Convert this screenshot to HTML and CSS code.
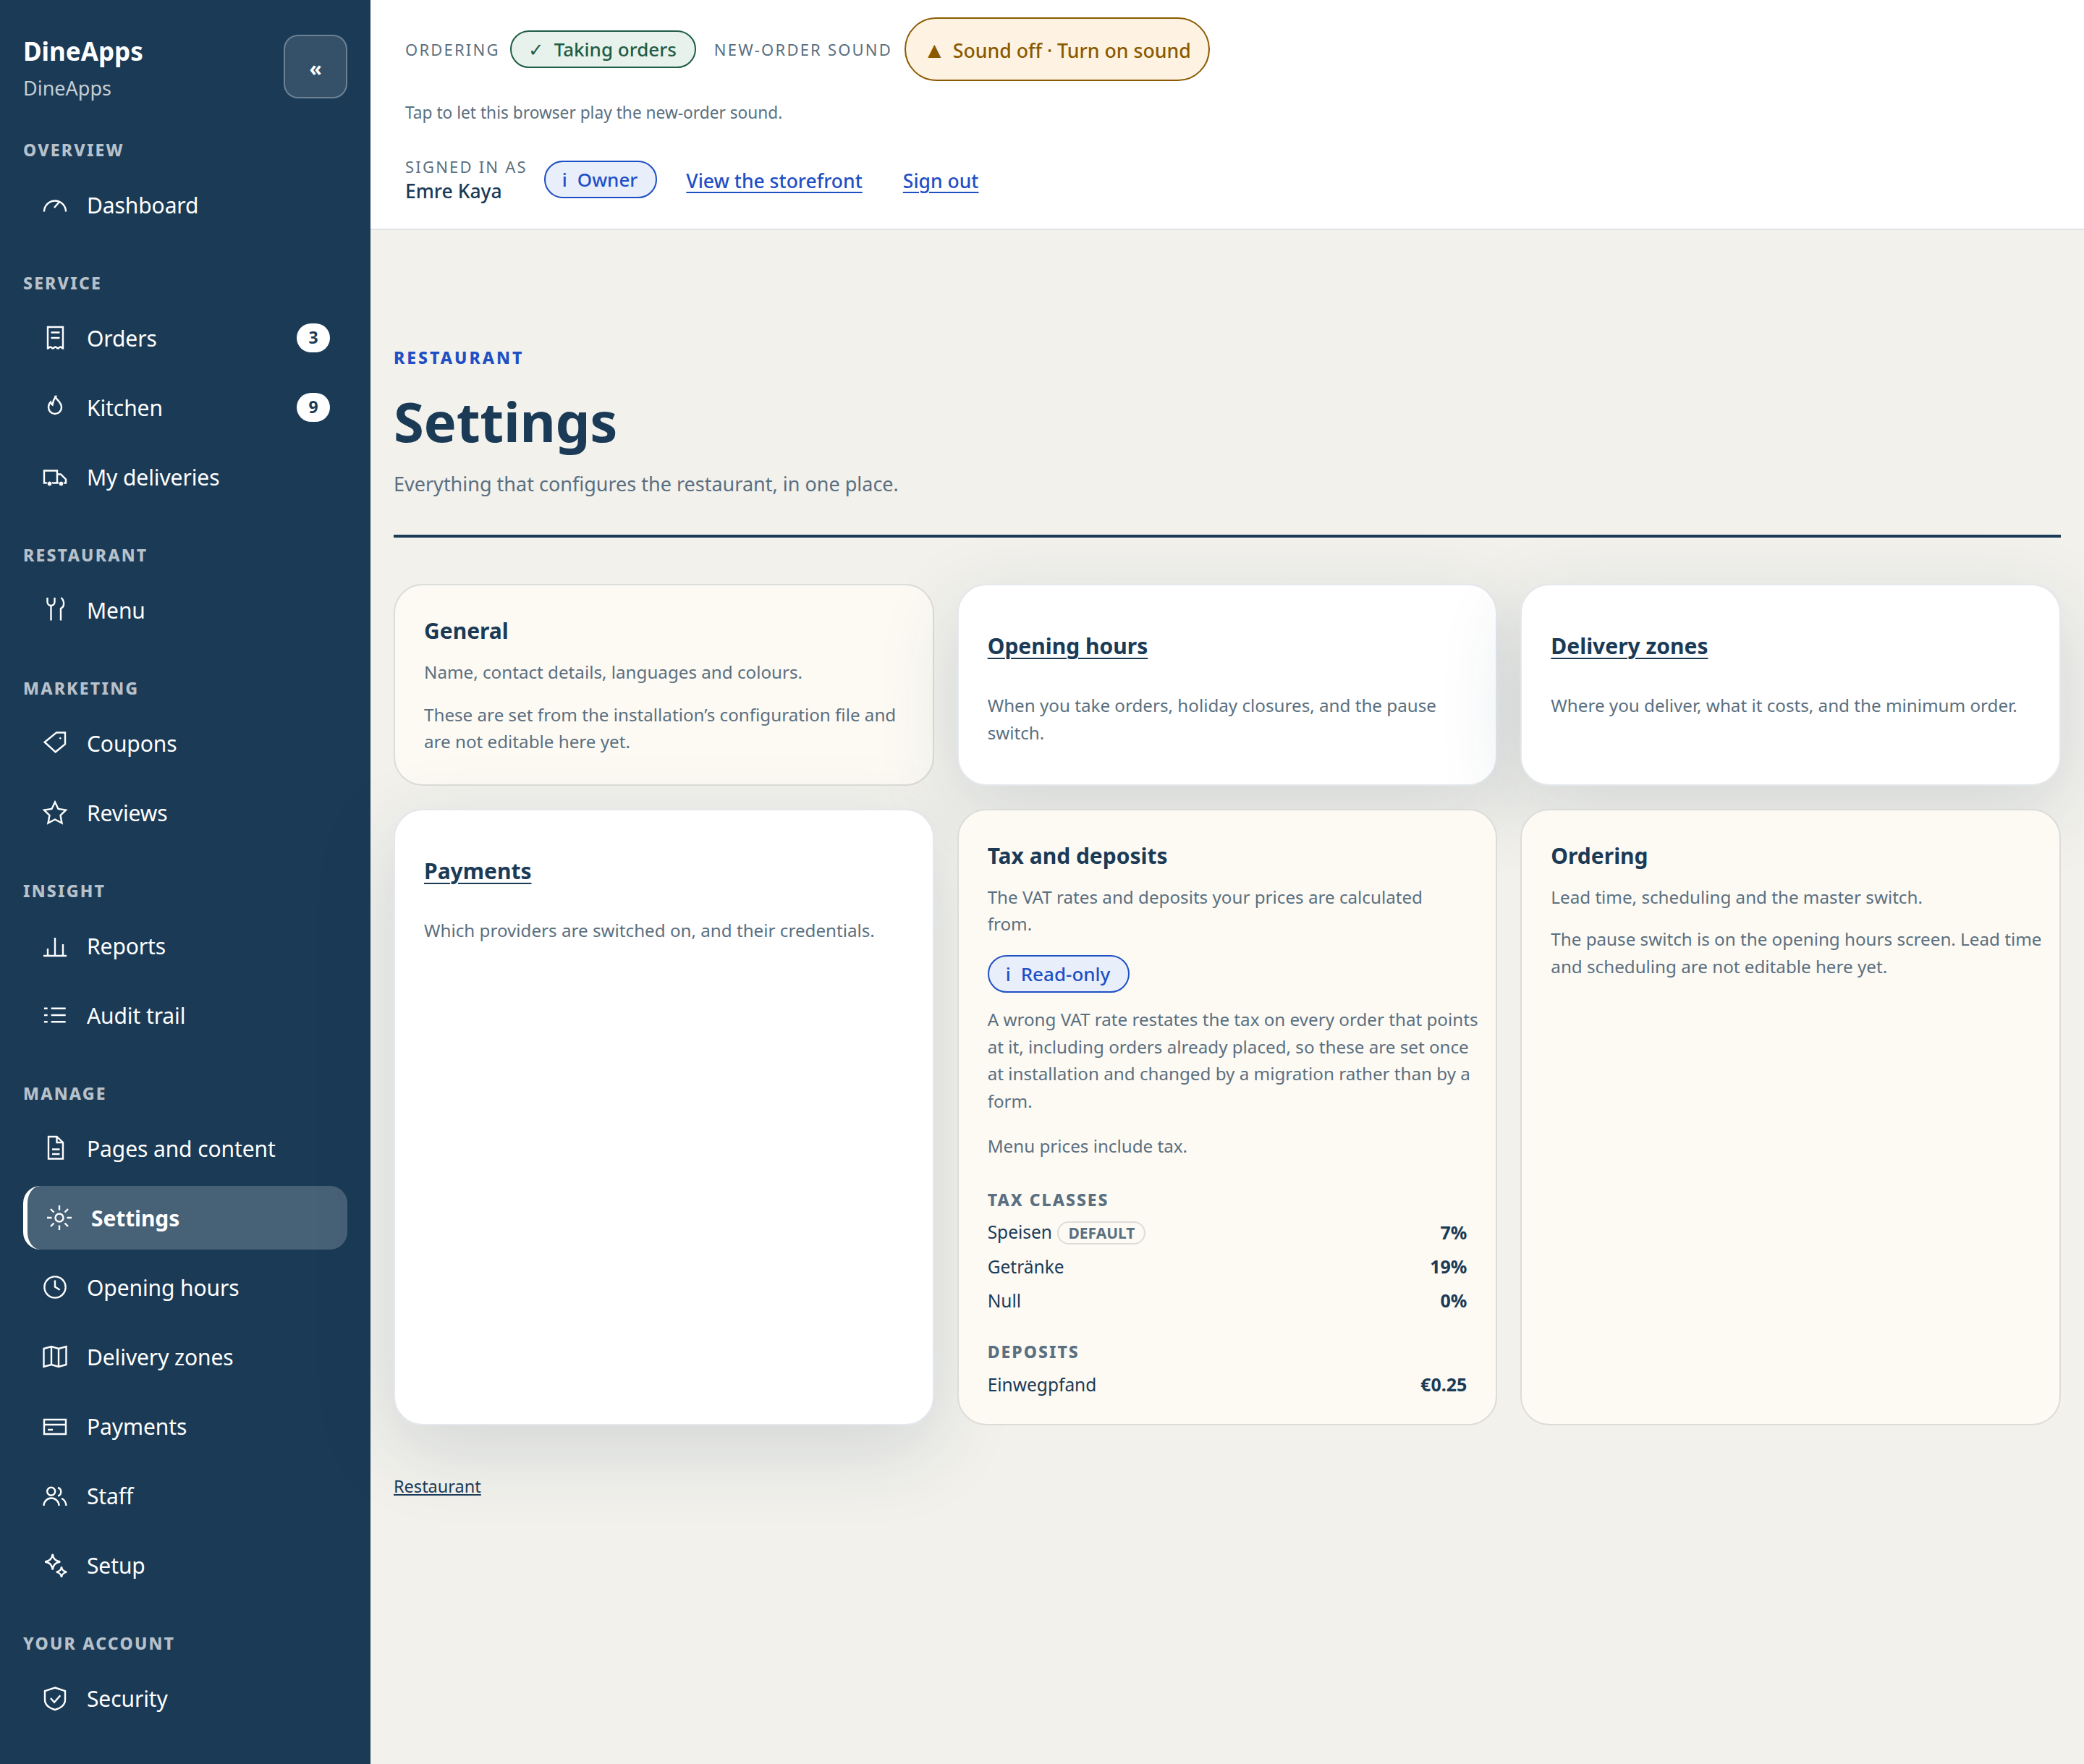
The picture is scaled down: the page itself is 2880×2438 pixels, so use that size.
FILE: index.html
```html
<!DOCTYPE html>
<html lang="en">
<head>
    <meta charset="UTF-8">
    <meta name="viewport" content="width=device-width, initial-scale=1.0">
    <title>Settings - DineApps</title>
    <link rel="stylesheet" href="styles.css">
</head>
<body>
    <div class="shell">
        <aside class="sidebar">
            <div class="brand">
                <div class="brand-text">
                    <div class="brand-name">DineApps</div>
                    <div class="brand-sub">DineApps</div>
                </div>
                <button class="collapse" type="button">«</button>
            </div>

            <div class="nav-label first">Overview</div>
            <a class="nav-item"><svg class="nav-icon" viewBox="0 0 32 32"><path d="M1 25.500a15 15 0 0 1 30 0M15 20l7-8"/></svg>Dashboard</a>

            <div class="nav-label">Service</div>
            <a class="nav-item"><svg class="nav-icon" viewBox="0 0 32 32"><path d="M6 1h21v29.500c-1.500 0-1.500-2-3.500-2s-2 2-3.500 2-1.500-2-3.500-2-2 2-3.500 2-1.500-2-3.500-2-2 2-3.500 2zM10.500 8.500h12M10.500 16h12"/></svg>Orders<span class="badge">3</span></a>
            <a class="nav-item"><svg class="nav-icon" viewBox="0 0 32 32"><path d="M16.500 1c1 4.500 8.500 7.500 8.500 15a9 9 0 0 1-18 0c0-3 1-5.500 3-7.500 .5 2 1 3 2.500 4 .5-4 2-8 4.500-11.500z"/></svg>Kitchen<span class="badge">9</span></a>
            <a class="nav-item"><svg class="nav-icon" viewBox="0 0 32 32"><path d="M6 24.500H1V7.500h18v17h-8M19 12.500h5l7 7v5h-3M19 24.500h2"/><circle class="solid" cx="8.500" cy="25.500" r="3.400"/><circle class="solid" cx="24.500" cy="25.500" r="3.400"/></svg>My deliveries</a>

            <div class="nav-label">Restaurant</div>
            <a class="nav-item"><svg class="nav-icon" viewBox="0 0 32 32"><path d="M5.500-1v6a5 5 0 0 0 10 0v-6M10.500 10v20.500M24.500-1c3 3 4 7 3.500 10-.5 3-2 4-4 5v16.500"/></svg>Menu</a>

            <div class="nav-label">Marketing</div>
            <a class="nav-item"><svg class="nav-icon" viewBox="0 0 32 32"><path d="M1.700 14.700 18 1.500h12v16L16.700 28.300z"/><circle class="solid" cx="23.300" cy="9.300" r="1.800"/></svg>Coupons</a>
            <a class="nav-item"><svg class="nav-icon" viewBox="0 0 32 32"><path d="m16 1.500 4.500 9.500 10.500 1.500-7.500 7.500 2 10.500-9.500-5-9.500 5 2-10.500L1 12.500l10.500-1.500z"/></svg>Reviews</a>

            <div class="nav-label">Insight</div>
            <a class="nav-item"><svg class="nav-icon" viewBox="0 0 32 32"><path d="M0 30h32M6 30V20M16 30V5M27 30V14"/></svg>Reports</a>
            <a class="nav-item"><svg class="nav-icon" viewBox="0 0 32 32"><path d="M10.700 6.700h20M10.700 16h20M10.700 25.300h20M1 6.700h4.700M1 16h4.700M1 25.300h4.700"/></svg>Audit trail</a>

            <div class="nav-label">Manage</div>
            <a class="nav-item"><svg class="nav-icon" viewBox="0 0 32 32"><path d="M7 0h11.500l8.500 8v22.500H7zM18.500 0v8H27M12 17.500h10.500M12 24h10.500"/></svg>Pages and content</a>
            <a class="nav-item active"><svg class="nav-icon" viewBox="0 0 32 32"><circle cx="16" cy="16" r="5.500"/><path d="M16-1v6.500M16 26.500V33M-1 16h6.500M26.500 16H33M4 4l4.500 4.500M23.500 23.500 28 28M4 28l4.500-4.500M23.500 8.500 28 4"/></svg>Settings</a>
            <a class="nav-item"><svg class="nav-icon" viewBox="0 0 32 32"><circle cx="16" cy="16" r="14.600"/><path d="M16 6.500V15.500l6.700 4.200"/></svg>Opening hours</a>
            <a class="nav-item"><svg class="nav-icon" viewBox="0 0 32 32"><path d="M.5 5 11 2l10 3 10.500-3v25L21 30l-10-3-10.500 3zM11 2v25M21 5v25"/></svg>Delivery zones</a>
            <a class="nav-item"><svg class="nav-icon" viewBox="0 0 32 32"><path d="M1 7h30v20H1zM1 14h30M6 21h7"/></svg>Payments</a>
            <a class="nav-item"><svg class="nav-icon" viewBox="0 0 32 32"><circle cx="10.700" cy="10.300" r="5.500"/><path d="M.5 30a10.500 10.500 0 0 1 21 0M20 5a6 6 0 0 1 0 11.500M25 20c4 1.500 6 5 6.500 10"/></svg>Staff</a>
            <a class="nav-item"><svg class="nav-icon" viewBox="0 0 32 32"><path d="M12.700 1c1 6 3 9 10.500 10.500-7.500 1.500-9.500 4.500-10.500 11-1-6.500-3-9.500-10.500-11C9.700 10 11.700 7 12.700 1zM25 18.500c.5 4 2 6 7 7.200-5 1.200-6.500 3.200-7 7.200-.5-4-2-6-7-7.200 5-1.200 6.500-3.200 7-7.200z"/></svg>Setup</a>

            <div class="nav-label">Your account</div>
            <a class="nav-item"><svg class="nav-icon" viewBox="0 0 32 32"><path d="M16 1.500 30 6v12c0 8-7 12-14 14C9 30 2 26 2 18V6zM10 16l5 5.700 8.300-9.400"/></svg>Security</a>
        </aside>

        <div class="main">
            <header class="topbar">
                <div class="topbar-row">
                    <span class="top-label">Ordering</span>
                    <span class="chip chip-green"><span class="chip-icon">✓</span>Taking orders</span>
                    <span class="top-label second">New-order sound</span>
                    <button class="sound-btn" type="button"><span class="chip-icon">▲</span>Sound off · Turn on sound</button>
                </div>
                <p class="top-hint">Tap to let this browser play the new-order sound.</p>
                <div class="topbar-row user-row">
                    <div class="signed">
                        <span class="top-label">Signed in as</span>
                        <strong>Emre Kaya</strong>
                    </div>
                    <span class="chip chip-blue"><span class="chip-icon">i</span>Owner</span>
                    <a class="top-link" href="#">View the storefront</a>
                    <a class="top-link" href="#">Sign out</a>
                </div>
            </header>

            <main class="content">
                <div class="eyebrow">Restaurant</div>
                <h1>Settings</h1>
                <p class="lead">Everything that configures the restaurant, in one place.</p>
                <hr class="rule">

                <div class="cards">
                    <section class="card">
                        <h2>General</h2>
                        <p>Name, contact details, languages and colours.</p>
                        <p>These are set from the installation’s configuration file and<br>are not editable here yet.</p>
                    </section>
                    <section class="card card-link">
                        <h2><a href="#">Opening hours</a></h2>
                        <p>When you take orders, holiday closures, and the pause<br>switch.</p>
                    </section>
                    <section class="card card-link">
                        <h2><a href="#">Delivery zones</a></h2>
                        <p>Where you deliver, what it costs, and the minimum order.</p>
                    </section>
                    <section class="card card-link">
                        <h2><a href="#">Payments</a></h2>
                        <p>Which providers are switched on, and their credentials.</p>
                    </section>
                    <section class="card">
                        <h2>Tax and deposits</h2>
                        <p class="tight">The VAT rates and deposits your prices are calculated<br>from.</p>
                        <span class="chip chip-blue chip-card"><span class="chip-icon">i</span>Read-only</span>
                        <p class="tight">A wrong VAT rate restates the tax on every order that points<br>at it, including orders already placed, so these are set once<br>at installation and changed by a migration rather than by a<br>form.</p>
                        <p>Menu prices include tax.</p>
                        <h3>Tax classes</h3>
                        <dl class="rates">
                            <div><dt>Speisen <span class="tag">Default</span></dt><dd>7%</dd></div>
                            <div><dt>Getränke</dt><dd>19%</dd></div>
                            <div><dt>Null</dt><dd>0%</dd></div>
                        </dl>
                        <h3 class="deposits">Deposits</h3>
                        <dl class="rates last">
                            <div><dt>Einwegpfand</dt><dd>€0.25</dd></div>
                        </dl>
                    </section>
                    <section class="card">
                        <h2>Ordering</h2>
                        <p>Lead time, scheduling and the master switch.</p>
                        <p>The pause switch is on the opening hours screen. Lead time<br>and scheduling are not editable here yet.</p>
                    </section>
                </div>

                <a class="back-link" href="#">Restaurant</a>
            </main>
        </div>
    </div>
</body>
</html>
```

FILE: styles.css
```css
* {
    box-sizing: border-box;
}

body {
    margin: 0;
    font-family: "Noto Sans", sans-serif;
    background-color: #f2f1ec;
    color: #1a3a56;
}

a {
    color: inherit;
}

.shell {
    display: flex;
    min-height: 2438px;
}

/* sidebar */
.sidebar {
    width: 512px;
    flex-shrink: 0;
    background-color: #1a3a56;
    color: white;
    padding: 48px 32px 0;
}

.brand {
    display: flex;
    justify-content: space-between;
    align-items: flex-start;
    height: 88px;
}

.brand-name {
    font-size: 35px;
    font-weight: 700;
    line-height: 46px;
}

.brand-sub {
    font-size: 27px;
    line-height: 40px;
    margin-top: 8px;
    color: rgba(255,255,255,0.75);
}

.collapse {
    width: 88px;
    height: 88px;
    padding: 4px 0 0;
    background-color: rgba(255,255,255,0.12);
    border: 2px solid rgba(255,255,255,0.28);
    border-radius: 20px;
    color: white;
    font-family: inherit;
    font-size: 28px;
    font-weight: 700;
}

.nav-label {
    font-size: 23px;
    font-weight: 800;
    letter-spacing: 2.200px;
    text-transform: uppercase;
    color: rgba(255,255,255,0.7);
    height: 32px;
    line-height: 32px;
    margin-top: 48px;
    margin-bottom: 16px;
}

.nav-label.first {
    margin-top: 55px;
}

.nav-item {
    display: flex;
    align-items: center;
    height: 88px;
    margin-bottom: 8px;
    padding-left: 28px;
    padding-right: 24px;
    font-size: 30px;
    letter-spacing: -0.100px;
    color: white;
    border-radius: 24px;
}

.nav-icon {
    width: 32px;
    height: 32px;
    margin-right: 28px;
    overflow: visible;
    fill: none;
    stroke: white;
    stroke-width: 2.400;
    flex-shrink: 0;
}

.nav-icon .solid {
    fill: white;
    stroke: #1a3a56;
    stroke-width: 1;
}

.nav-item.active {
    background-color: rgba(255,255,255,0.2);
    border-left: 6px solid white;
    font-weight: 700;
}

.badge {
    margin-left: auto;
    width: 46px;
    height: 40px;
    border-radius: 20px;
    background: white;
    color: #1a3a56;
    font-size: 23px;
    font-weight: 700;
    letter-spacing: 0;
    line-height: 38px;
    text-align: center;
}

/* top bar */
.main {
    flex: 1;
    min-width: 0;
}

.topbar {
    background: white;
    border-bottom: 2px solid #dfe3e6;
    height: 318px;
    padding: 24px 48px 0;
}

.topbar-row {
    display: flex;
    align-items: center;
    height: 88px;
}

.top-label {
    font-size: 22px;
    letter-spacing: 2.200px;
    text-transform: uppercase;
    color: #5a6f80;
    margin-right: 14px;
}

.top-label.second {
    margin-left: 25px;
    margin-right: 17px;
}

.chip {
    display: inline-flex;
    align-items: center;
    height: 52px;
    padding: 0 25px 0 23px;
    border-radius: 26px;
    font-size: 26px;
    font-weight: 500;
    border: 2px solid;
}

.chip-icon {
    margin-right: 14px;
}

.chip-green {
    background: #e8f2ec;
    color: #1f5c45;
    border-color: #1f5c45;
}

.chip-blue {
    background: #e8effb;
    color: #1f4fc4;
    border-color: #1f4fc4;
}

.sound-btn {
    height: 88px;
    padding: 0 24px;
    border-radius: 44px;
    background: #fef3e2;
    border: 2px solid #8a5a00;
    color: #8a5a00;
    font-family: inherit;
    font-size: 26.700px;
    font-weight: 500;
}

.sound-btn .chip-icon {
    font-size: 31px;
    margin-right: 10px;
}

.top-hint {
    margin: 27px 0 0;
    font-size: 22.700px;
    line-height: 34px;
    color: #5a6f80;
}

.user-row {
    margin-top: 31px;
}

.signed {
    display: flex;
    flex-direction: column;
    margin-top: 2px;
    margin-right: 9px;
}

.signed strong {
    font-size: 26.500px;
    font-weight: 500;
    line-height: 39px;
}

.top-link {
    font-size: 26.500px;
    font-weight: 500;
    color: #1f4fc4;
    margin-left: 40px;
    margin-top: 3px;
    text-decoration-thickness: 2px;
    text-underline-offset: 5px;
}

.user-row .top-link:last-child {
    margin-left: 56px;
}

/* content */
.content {
    padding: 158px 32px 0;
}

.eyebrow {
    font-size: 23px;
    font-weight: 800;
    letter-spacing: 3px;
    text-transform: uppercase;
    color: #1f4fc4;
    line-height: 36px;
}

h1 {
    font-size: 76px;
    font-weight: 700;
    letter-spacing: -0.300px;
    line-height: 96px;
    margin: 22px 0 0;
}

.lead {
    font-size: 27px;
    line-height: 44px;
    color: #5a6f80;
    margin: 17px 0 0;
}

.rule {
    border: 0;
    border-top: 4px solid #1a3a56;
    margin: 48px 0 0;
}

.cards {
    display: grid;
    grid-template-columns: repeat(3, 1fr);
    gap: 32px;
    margin-top: 64px;
}

.card {
    background: #fdfaf4;
    border: 2px solid #dcdcd8;
    border-radius: 40px;
    padding: 40px 20px 40px 40px;
}

.card-link {
    background: white;
    border-color: #e4e8ec;
    box-shadow: 0 32px 112px rgba(26,58,86,0.15);
}

.card h2 {
    font-size: 30px;
    font-weight: 700;
    line-height: 46px;
    margin: 0;
}

.card-link h2 {
    display: flex;
    align-items: center;
    min-height: 88px;
}

.card h2 a {
    text-decoration-thickness: 2px;
    text-underline-offset: 5px;
}

.card p {
    font-size: 24.200px;
    line-height: 37.600px;
    color: #5a6f80;
    margin: 15px 0 0;
}

.card p + p {
    margin-top: 21px;
}

.card p.tight + p {
    margin-top: 25px;
}

.card-link p {
    margin-top: 19px;
}

.chip-card {
    margin: 24px 0 3px;
}

h3 {
    font-size: 23px;
    font-weight: 800;
    letter-spacing: 2px;
    text-transform: uppercase;
    color: #5a6f80;
    line-height: 32px;
    margin: 39px 0 0;
}

h3.deposits {
    margin-top: 31px;
}

.rates {
    margin: 6px 20px 0 0;
}

.rates.last {
    margin-bottom: -9px;
}

.rates div {
    display: flex;
    justify-content: space-between;
    align-items: center;
    height: 47px;
}

.rates dt {
    font-size: 24.500px;
}

.rates dd {
    margin: 0;
    font-size: 25px;
    font-weight: 700;
}

.tag {
    display: inline-block;
    border: 2px solid #dcdcd8;
    border-radius: 18px;
    padding: 0 13px;
    margin-left: 1px;
    font-size: 21px;
    font-weight: 700;
    color: #5a6f80;
    text-transform: uppercase;
}

.back-link {
    display: inline-block;
    margin-top: 68px;
    font-size: 23.500px;
}
```
